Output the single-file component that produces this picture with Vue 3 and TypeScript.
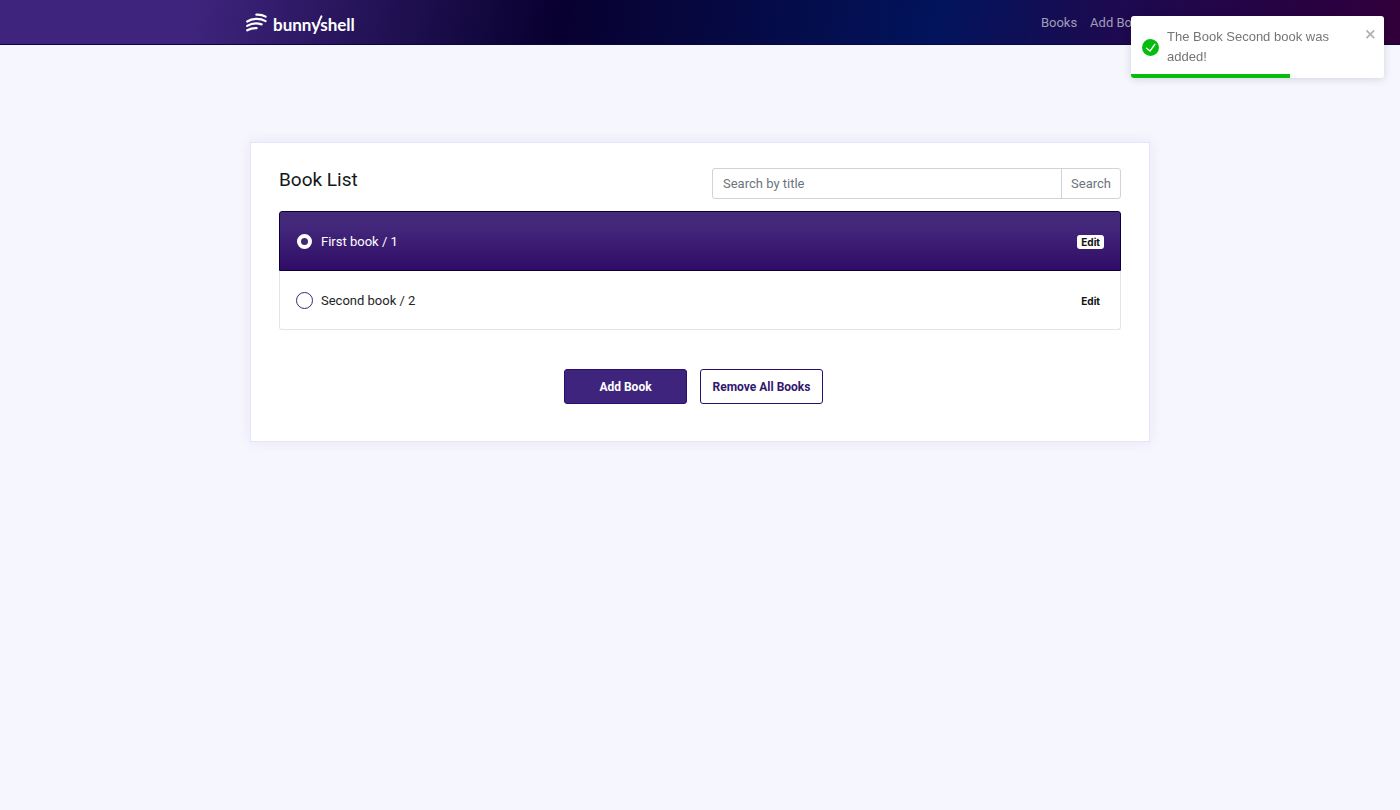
<script setup lang="ts">
import { ref } from 'vue'

interface Book {
  id: number
  title: string
}

const books = ref<Book[]>([
  { id: 1, title: 'First book' },
  { id: 2, title: 'Second book' },
])
const selected = ref<number>(1)
const query = ref<string>('')
const toastVisible = ref<boolean>(true)
const progress = 63
</script>

<template>
  <div class="page">
    <header class="navbar">
      <div class="navbar-inner">
        <a class="brand" href="#" aria-label="bunnyshell">
          <svg class="brand-mark" viewBox="0 0 21 19" aria-hidden="true">
            <g fill="none" stroke="#fff" stroke-width="2.2" stroke-linecap="round">
              <path d="M10.4 1.6C13.6 1.4 16.8 1.9 19.6 3.6" />
              <path d="M1.2 8.5C6 5.4 13.5 4.8 19.6 8.1" />
              <path d="M1.2 12.9C5.5 10.4 10.5 9.7 15.6 11.4" />
              <path d="M1.2 17.3C4 15.8 7 15 10.6 15.2" />
            </g>
          </svg>
          <span class="brand-name">bunn<span class="brand-y">y</span>shell</span>
        </a>
        <nav class="nav-links">
          <a href="#books">Books</a>
          <a href="#add">Add Book</a>
        </nav>
      </div>
    </header>

    <main class="card">
      <div class="card-head">
        <h1>Book List</h1>
        <form class="search" @submit.prevent>
          <input v-model="query" type="text" placeholder="Search by title" aria-label="Search by title" />
          <button type="submit">Search</button>
        </form>
      </div>

      <ul class="books">
        <li v-for="book in books" :key="book.id" :class="{ active: book.id === selected }">
          <label>
            <input v-model="selected" type="radio" name="book" :value="book.id" />
            <span>{{ book.title }} / {{ book.id }}</span>
          </label>
          <a class="edit" :href="`#edit-${book.id}`">Edit</a>
        </li>
      </ul>

      <div class="actions">
        <button type="button" class="btn primary">Add Book</button>
        <button type="button" class="btn outline" @click="books = []">Remove All Books</button>
      </div>
    </main>

    <div v-if="toastVisible" class="toast" role="alert">
      <svg class="toast-icon" viewBox="0 0 24 24" aria-hidden="true">
        <path
          fill="#07bc0c"
          d="M12 0a12 12 0 1012 12A12.014 12.014 0 0012 0zm6.927 8.2l-6.845 9.289a1.011 1.011 0 01-1.43.188l-4.888-3.908a1 1 0 111.25-1.562l4.076 3.261 6.227-8.451a1 1 0 111.61 1.183z"
        />
      </svg>
      <p>The Book Second book was added!</p>
      <button type="button" class="toast-close" aria-label="Close" @click="toastVisible = false">
        <svg viewBox="0 0 14 16" aria-hidden="true">
          <path
            fill="currentColor"
            fill-rule="evenodd"
            d="M7.71 8.23l3.75 3.75-1.48 1.48-3.75-3.75-3.75 3.75L1 11.98l3.75-3.75L1 4.48 2.48 3l3.75 3.75L9.98 3l1.48 1.48-3.75 3.75z"
          />
        </svg>
      </button>
      <div class="toast-progress" :style="{ width: progress + '%' }"></div>
    </div>
  </div>
</template>

<style>
body {
  margin: 0;
  background: #f6f6fe;
}
</style>

<style scoped>
.page {
  min-height: 100vh;
  font-family: Roboto, 'Liberation Sans', sans-serif;
  font-size: 13px;
  line-height: 20px;
  color: #212529;
}

.page * {
  box-sizing: border-box;
}

.navbar {
  padding: 0 16px;
  border-bottom: 1px solid #07074a;
  background: linear-gradient(100deg, #3e247c 0%, #3e247c 14%, #08002f 40%, #02145c 67%, #1c0a50 79%, #2b0040 95%, #32003a 100%);
}

.navbar-inner {
  display: flex;
  align-items: center;
  justify-content: space-between;
  max-width: 908px;
  height: 44px;
  margin: 0 auto;
}

.brand {
  display: flex;
  align-items: center;
  gap: 6px;
  color: #fff;
  text-decoration: none;
}

.brand-mark {
  width: 21px;
  height: 19px;
}

.brand-name {
  padding-top: 5px;
  font-family: Lato, sans-serif;
  font-size: 17px;
  font-weight: 700;
}

.brand-y {
  position: relative;
}

.brand-y::after {
  content: '';
  position: absolute;
  right: -1px;
  top: 1px;
  width: 2px;
  height: 9px;
  border-radius: 1px;
  background: #fff;
  transform: rotate(24deg);
}

.nav-links {
  display: flex;
  gap: 13px;
  padding: 2px 8px 0 0;
}

.nav-links a {
  color: #a29db8;
  text-decoration: none;
}

.card {
  max-width: 900px;
  margin: 97px auto 0;
  padding: 25px 28px 37px;
  border: 1px solid #e6e4fc;
  background: #fff;
  box-shadow: 0 0 12px rgba(62, 36, 124, 0.08);
}

.card-head {
  display: flex;
  align-items: flex-start;
  justify-content: space-between;
  margin-bottom: 12px;
}

h1 {
  margin: 0;
  font-size: 19px;
  font-weight: 400;
  line-height: 24px;
  color: #14171a;
}

.search {
  display: flex;
  width: 409px;
  height: 31px;
  border: 1px solid #ced4da;
  border-radius: 3px;
}

.search input {
  flex: 1;
  min-width: 0;
  padding: 0 10px;
  border: 0;
  outline: 0;
  background: transparent;
  font: inherit;
  color: #212529;
}

.search input::placeholder {
  color: #6c757d;
  opacity: 1;
}

.search button {
  width: 59px;
  padding: 0;
  border: 0;
  border-left: 1px solid #ced4da;
  background: transparent;
  font: inherit;
  color: #6c757d;
}

.books {
  margin: 0;
  padding: 0;
  list-style: none;
}

.books li {
  display: flex;
  align-items: center;
  justify-content: space-between;
  height: 59px;
  padding: 0 16px;
  border: 1px solid #e4e5e7;
  border-top: 0;
}

.books li:first-child {
  border-radius: 3px 3px 0 0;
}

.books li:last-child {
  border-radius: 0 0 3px 3px;
}

.books li.active {
  height: 60px;
  border: 1px solid #0d0038;
  background: linear-gradient(180deg, #452a78 0%, #42267a 30%, #2f0c66 100%);
  color: #fff;
}

.books label {
  display: flex;
  align-items: center;
  gap: 8px;
}

.books label span {
  padding-top: 2px;
}

.books input {
  appearance: none;
  width: 17px;
  height: 17px;
  margin: 0;
  border: 1px solid #3e247c;
  border-radius: 50%;
  background: #fff;
}

.books input:checked {
  width: 15px;
  height: 15px;
  margin: 0 1px;
  border: 4px solid #fff;
  background: #42267a;
}

.edit {
  margin-top: 2px;
  padding: 0 4px;
  border-radius: 3px;
  background: #fff;
  font-family: Inter, sans-serif;
  font-size: 10px;
  font-weight: 700;
  line-height: 14px;
  color: #101214;
  text-decoration: none;
}

.actions {
  display: flex;
  justify-content: center;
  gap: 13px;
  margin: 39px 13px 0 0;
}

.btn {
  width: 123px;
  height: 35px;
  padding: 0;
  border: 1px solid #2a0e70;
  border-radius: 3px;
  font-family: inherit;
  font-size: 12px;
  font-weight: 700;
}

.primary {
  background: #3e247c;
  color: #fff;
}

.outline {
  background: #fff;
  color: #32176e;
}

.toast {
  position: fixed;
  top: 16px;
  right: 16px;
  display: flex;
  align-items: center;
  width: 253px;
  padding: 11px;
  overflow: hidden;
  border-radius: 3px;
  background: #fff;
  box-shadow: 0 1px 9px rgba(0, 0, 0, 0.15);
  font-family: 'Liberation Sans', sans-serif;
  color: #757575;
}

.toast-icon {
  flex: none;
  width: 17px;
  height: 17px;
  margin-right: 8px;
}

.toast p {
  flex: 1;
  margin: 0;
}

.toast-close {
  align-self: flex-start;
  width: 12px;
  height: 14px;
  margin-right: -4px;
  padding: 0;
  border: 0;
  background: transparent;
  color: #b2b2b2;
}

.toast-close svg {
  display: block;
  width: 12px;
  height: 14px;
}

.toast-progress {
  position: absolute;
  left: 0;
  bottom: 0;
  height: 4px;
  background: #07bc0c;
}
</style>
